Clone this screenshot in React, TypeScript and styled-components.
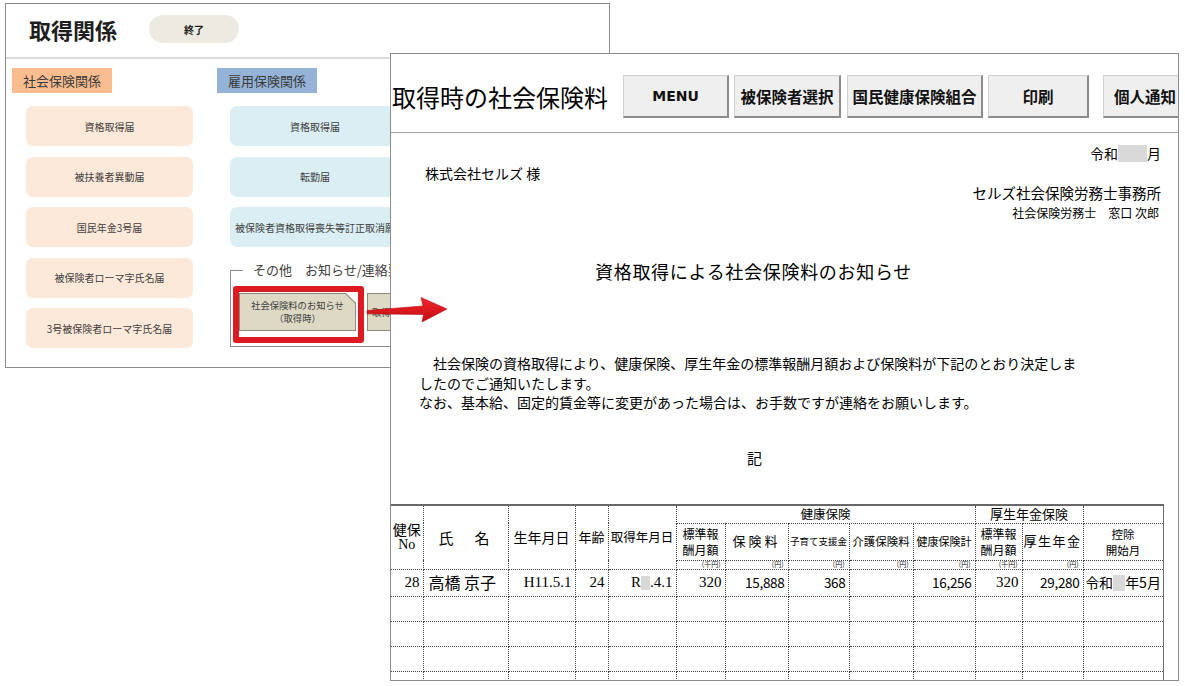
import React from "react"
import styled, {createGlobalStyle} from "styled-components"

const JP = `"Noto Sans CJK JP", "Noto Sans", sans-serif`
const SERIF = `"Liberation Serif", "Noto Sans CJK JP", serif`

const GlobalStyle = createGlobalStyle`
  html, body {
    margin: 0;
    padding: 0;
    background: #ffffff;
  }
  body {
    font-family: ${JP};
    color: #000;
  }
`

const Canvas = styled.div`
  position: relative;
  width: 1185px;
  height: 686px;
  overflow: hidden;
  background: #fff;
`

// ---------- back window : 取得関係 ----------

const MenuWindow = styled.div`
  position: absolute;
  left: 5px;
  top: 3px;
  width: 605px;
  height: 365px;
  box-sizing: border-box;
  border: 1px solid #8c8c8c;
  background: #fff;
  overflow: hidden;
  color: #404040;
  z-index: 1;
`

const MenuHeader = styled.div`
  height: 55px;
  box-sizing: border-box;
  display: flex;
  align-items: center;
  padding: 0 0 3px 23px;
  border-bottom: 2px solid #dadada;
`

const MenuTitle = styled.h1`
  margin: 0;
  font-size: 22px;
  font-weight: 700;
  line-height: 28px;
  color: #1e1e1e;
`

const PillButton = styled.div`
  margin-left: 32px;
  width: 90px;
  height: 28px;
  border-radius: 14px;
  background: #edebe1;
  display: flex;
  align-items: center;
  justify-content: center;
  font-size: 10px;
  font-weight: 700;
  color: #222;
`

const MenuBody = styled.div`
  display: grid;
  grid-template-columns: 205px 380px;
  padding: 9px 0 0 6px;
`

const Column = styled.div`
  display: flex;
  flex-direction: column;
  align-items: flex-start;
`

type Tone = "orange" | "blue"

const SectionLabel = styled.div<{$tone: Tone}>`
  width: 100px;
  height: 25px;
  box-sizing: border-box;
  padding-left: 11px;
  line-height: 25px;
  font-size: 13px;
  color: #3a3a3a;
  background: ${p => p.$tone === "orange" ? "#f9bd8f" : "#95b3d7"};
`

const ButtonStack = styled.div<{$indent: number}>`
  display: flex;
  flex-direction: column;
  gap: 10.5px;
  margin: 13px 0 0 ${p => p.$indent}px;
`

const FormButton = styled.div<{$tone: Tone, $w: number, $left?: boolean}>`
  width: ${p => p.$w}px;
  height: 40px;
  box-sizing: border-box;
  border-radius: 7px;
  background: ${p => p.$tone === "orange" ? "#fde9d9" : "#daeef3"};
  display: flex;
  align-items: center;
  justify-content: ${p => p.$left ? "flex-start" : "center"};
  padding-left: ${p => p.$left ? 5 : 0}px;
  font-size: 10px;
  color: #404040;
  white-space: nowrap;
`

const NoticeGroup = styled.fieldset`
  margin: 14px 0 0 13px;
  width: 360px;
  min-width: 0;
  box-sizing: border-box;
  border: 1px solid #8a8a8a;
  padding: 0 0 15px 8px;
`

const NoticeLegend = styled.legend`
  margin-left: 4px;
  padding: 0 10px;
  font-size: 13px;
  line-height: 18px;
  color: #404040;
  white-space: nowrap;
`

const NoticeRow = styled.div`
  display: flex;
  gap: 11px;
  margin-top: 14px;
`

const Highlight = styled.div`
  position: relative;
`

const HighlightFrame = styled.div`
  position: absolute;
  top: -7px;
  left: -6px;
  right: -8px;
  bottom: -12px;
  border: 6px solid #dc1c22;
  border-radius: 3px;
  pointer-events: none;
`

const NoteButton = styled.div`
  width: 117px;
  height: 38px;
  box-sizing: border-box;
  padding: 1px;
  background: #8f8a76;
  clip-path: polygon(0 0, calc(100% - 10px) 0, 100% 10px, 100% 100%, 0 100%);
`

const NoteFace = styled.div<{$left?: boolean}>`
  height: 100%;
  background: #ddd9c4;
  clip-path: polygon(0 0, calc(100% - 9.5px) 0, 100% 9.5px, 100% 100%, 0 100%);
  display: flex;
  flex-direction: column;
  align-items: ${p => p.$left ? "flex-start" : "center"};
  justify-content: center;
  padding-left: ${p => p.$left ? 4 : 0}px;
  font-size: 9.3px;
  line-height: 13px;
  color: #404040;
  white-space: nowrap;
`

// ---------- front window : 取得時の社会保険料 ----------

const ReportWindow = styled.div`
  position: absolute;
  left: 390px;
  top: 53px;
  width: 789px;
  height: 628px;
  box-sizing: border-box;
  border: 1px solid #8c8c8c;
  background: #fff;
  overflow: hidden;
  z-index: 2;
`

const ReportHeader = styled.div`
  height: 79px;
  box-sizing: border-box;
  display: flex;
  align-items: flex-end;
  padding: 0 0 14px 1px;
  border-bottom: 1px solid #a6a6a6;
`

const ReportTitle = styled.div`
  flex: none;
  font-size: 24px;
  line-height: 43px;
  margin-right: 15px;
  white-space: nowrap;
`

const ToolButton = styled.div<{$w: number, $after?: number, $latin?: boolean}>`
  flex: none;
  width: ${p => p.$w}px;
  height: 43px;
  box-sizing: border-box;
  margin-right: ${p => p.$after ?? 5}px;
  background: #efefef;
  border: 1px solid #cfcfcf;
  border-right: 2px solid #8c8c8c;
  border-bottom: 2px solid #8c8c8c;
  display: flex;
  align-items: center;
  justify-content: center;
  font-family: ${p => p.$latin ? `"DejaVu Sans", sans-serif` : JP};
  font-size: ${p => p.$latin ? 14 : 15.5}px;
  font-weight: 700;
  color: #111;
  white-space: nowrap;
`

const ReportBody = styled.div`
  padding-top: 10px;
  font-size: 14px;
  color: #000;
`

const RightLine = styled.div<{$size: number, $pr: number}>`
  text-align: right;
  line-height: 20px;
  font-size: ${p => p.$size}px;
  padding-right: ${p => p.$pr}px;
  white-space: nowrap;
`

const Addressee = styled.div`
  line-height: 20px;
  font-size: 14px;
  padding-left: 34px;
`

const Masked = styled.span<{$w: number, $h: number}>`
  display: inline-block;
  width: ${p => p.$w}px;
  height: ${p => p.$h}px;
  background: #d9d9d9;
  vertical-align: ${p => -Math.round(p.$h / 5)}px;
`

const NoticeTitle = styled.div`
  margin-top: 36px;
  padding-left: 204px;
  font-size: 18px;
  line-height: 24px;
  letter-spacing: 0.7px;
  white-space: nowrap;
`

const Paragraph = styled.div`
  margin-top: 71px;
  padding-left: 28px;
  font-size: 14px;
  line-height: 19.5px;
  white-space: nowrap;
`

const Indent = styled.span`
  display: inline-block;
  width: 14px;
`

const Ki = styled.div`
  margin-top: 35.5px;
  padding-left: 356px;
  font-size: 15px;
  line-height: 20px;
`

const Sheet = styled.table`
  margin-top: 36px;
  border-collapse: collapse;
  table-layout: fixed;
  width: 772px;
  border-top: 2px solid #686868;
  border-right: 1px solid #6e6e6e;
  color: #000;
`

const Row = styled.tr<{$h: number}>`
  height: ${p => p.$h}px;
`

const Cell = styled.td<{
    $align?: "left" | "right" | "center",
    $size?: number,
    $serif?: boolean,
    $edge?: boolean,
    $ls?: number,
}>`
  border: 1px dotted #444;
  ${p => p.$edge ? "border-left: none;" : ""}
  padding: 0 ${p => p.$align === "right" ? 3 : 0}px 0 ${p => p.$align === "left" ? 5 : 0}px;
  text-align: ${p => p.$align ?? "center"};
  font-family: ${p => p.$serif ? SERIF : JP};
  font-size: ${p => p.$size ?? 13}px;
  letter-spacing: ${p => p.$ls ?? 0}px;
  line-height: 1.15;
  white-space: nowrap;
  overflow: hidden;
  vertical-align: middle;
`

const Lines = styled.div`
  display: flex;
  flex-direction: column;
  align-items: center;
`

const Line = styled.span`
  display: block;
  line-height: 16px;
`

const Unit = styled(Cell)`
  font-size: 7px;
  line-height: 7px;
  padding-right: 4px;
  text-align: right;
  color: #222;
`

const Arrow = styled.svg`
  position: absolute;
  left: 360px;
  top: 290px;
  z-index: 3;
  overflow: visible;
`

const COLS = [32, 85, 67, 33, 68, 49, 63, 61, 64, 62, 47, 61, 80]

const App: React.FC = () => {
    return (
        <Canvas>
            <GlobalStyle/>

            <MenuWindow>
                <MenuHeader>
                    <MenuTitle>取得関係</MenuTitle>
                    <PillButton>終了</PillButton>
                </MenuHeader>
                <MenuBody>
                    <Column>
                        <SectionLabel $tone="orange">社会保険関係</SectionLabel>
                        <ButtonStack $indent={14}>
                            <FormButton $tone="orange" $w={167}>資格取得届</FormButton>
                            <FormButton $tone="orange" $w={167}>被扶養者異動届</FormButton>
                            <FormButton $tone="orange" $w={167}>国民年金3号届</FormButton>
                            <FormButton $tone="orange" $w={167}>被保険者ローマ字氏名届</FormButton>
                            <FormButton $tone="orange" $w={167}>3号被保険者ローマ字氏名届</FormButton>
                        </ButtonStack>
                    </Column>
                    <Column>
                        <SectionLabel $tone="blue">雇用保険関係</SectionLabel>
                        <ButtonStack $indent={13}>
                            <FormButton $tone="blue" $w={170}>資格取得届</FormButton>
                            <FormButton $tone="blue" $w={170}>転勤届</FormButton>
                            <FormButton $tone="blue" $w={180} $left>被保険者資格取得喪失等訂正取消願</FormButton>
                        </ButtonStack>
                        <NoticeGroup>
                            <NoticeLegend>その他　お知らせ/連絡票</NoticeLegend>
                            <NoticeRow>
                                <Highlight>
                                    <NoteButton>
                                        <NoteFace>
                                            <span>社会保険料のお知らせ</span>
                                            <span>（取得時）</span>
                                        </NoteFace>
                                    </NoteButton>
                                    <HighlightFrame/>
                                </Highlight>
                                <NoteButton>
                                    <NoteFace $left>取得時連絡票</NoteFace>
                                </NoteButton>
                            </NoticeRow>
                        </NoticeGroup>
                    </Column>
                </MenuBody>
            </MenuWindow>

            <ReportWindow>
                <ReportHeader>
                    <ReportTitle>取得時の社会保険料</ReportTitle>
                    <ToolButton $w={106} $latin>MENU</ToolButton>
                    <ToolButton $w={107} $after={6}>被保険者選択</ToolButton>
                    <ToolButton $w={136}>国民健康保険組合</ToolButton>
                    <ToolButton $w={101} $after={14}>印刷</ToolButton>
                    <ToolButton $w={85}>個人通知</ToolButton>
                </ReportHeader>
                <ReportBody>
                    <RightLine $size={14} $pr={17}>令和<Masked $w={29} $h={17}/>月</RightLine>
                    <Addressee>株式会社セルズ 様</Addressee>
                    <RightLine $size={14.5} $pr={17}>セルズ社会保険労務士事務所</RightLine>
                    <RightLine $size={12} $pr={19}>社会保険労務士{"　"}窓口 次郎</RightLine>
                    <NoticeTitle>資格取得による社会保険料のお知らせ</NoticeTitle>
                    <Paragraph>
                        <Indent/>社会保険の資格取得により、健康保険、厚生年金の標準報酬月額および保険料が下記のとおり決定しま<br/>
                        したのでご通知いたします。<br/>
                        なお、基本給、固定的賃金等に変更があった場合は、お手数ですが連絡をお願いします。
                    </Paragraph>
                    <Ki>記</Ki>
                    <Sheet>
                        <colgroup>
                            {COLS.map((w, i) => <col key={i} style={{width: w}}/>)}
                        </colgroup>
                        <tbody>
                        <Row $h={18}>
                            <Cell rowSpan={3} $edge $size={14}>
                                <Lines><Line>健保</Line><Line style={{fontFamily: SERIF}}>No</Line></Lines>
                            </Cell>
                            <Cell rowSpan={3} $size={15} $ls={3}>氏{"　"}名</Cell>
                            <Cell rowSpan={3} $size={14}>生年月日</Cell>
                            <Cell rowSpan={3} $size={13}>年齢</Cell>
                            <Cell rowSpan={3} $size={12.5}>取得年月日</Cell>
                            <Cell colSpan={5} $size={12.5}>健康保険</Cell>
                            <Cell colSpan={2} $size={13}>厚生年金保険</Cell>
                            <Cell/>
                        </Row>
                        <Row $h={37}>
                            <Cell $size={12}><Lines><Line>標準報</Line><Line>酬月額</Line></Lines></Cell>
                            <Cell $size={13} $ls={3}>保険料</Cell>
                            <Cell $size={9.5}>子育て支援金</Cell>
                            <Cell $size={11.5}>介護保険料</Cell>
                            <Cell $size={11}>健康保険計</Cell>
                            <Cell $size={12}><Lines><Line>標準報</Line><Line>酬月額</Line></Lines></Cell>
                            <Cell $size={13} $ls={1.5}>厚生年金</Cell>
                            <Cell $size={11.5}><Lines><Line>控除</Line><Line>開始月</Line></Lines></Cell>
                        </Row>
                        <Row $h={9}>
                            <Unit>(千円)</Unit>
                            <Unit>(円)</Unit>
                            <Unit>(円)</Unit>
                            <Unit>(円)</Unit>
                            <Unit>(円)</Unit>
                            <Unit>(千円)</Unit>
                            <Unit>(円)</Unit>
                            <Unit/>
                        </Row>
                        <Row $h={27}>
                            <Cell $edge $align="right" $serif $size={15}>28</Cell>
                            <Cell $align="left" $size={16}>高橋 京子</Cell>
                            <Cell $align="right" $serif $size={15}>H11.5.1</Cell>
                            <Cell $align="right" $serif $size={15}>24</Cell>
                            <Cell $align="right" $serif $size={15}>R<Masked $w={9} $h={14}/>.4.1</Cell>
                            <Cell $align="right" $serif $size={15}>320</Cell>
                            <Cell $align="right" $size={13.5} $ls={-0.3}>15,888</Cell>
                            <Cell $align="right" $size={13.5} $ls={-0.3}>368</Cell>
                            <Cell/>
                            <Cell $align="right" $size={13.5} $ls={-0.3}>16,256</Cell>
                            <Cell $align="right" $serif $size={15}>320</Cell>
                            <Cell $align="right" $size={13.5} $ls={-0.3}>29,280</Cell>
                            <Cell $size={14}>令和<Masked $w={12} $h={16}/>年5月</Cell>
                        </Row>
                        {[0, 1, 2, 3, 4].map(r => (
                            <Row key={r} $h={25}>
                                {COLS.map((_, c) => <Cell key={c} $edge={c === 0}/>)}
                            </Row>
                        ))}
                        </tbody>
                    </Sheet>
                </ReportBody>
            </ReportWindow>

            <Arrow width={90} height={40} viewBox="0 0 90 40">
                <defs>
                    <linearGradient id="arrowFill" x1="0" y1="0" x2="0" y2="1">
                        <stop offset="0" stopColor="#f3262b"/>
                        <stop offset="1" stopColor="#c10d12"/>
                    </linearGradient>
                </defs>
                <polygon
                    points="7,20.5 63,16 61,7.5 87,19 62,32 63.5,24.5 7,23.8"
                    fill="url(#arrowFill)"
                    stroke="#b40a10"
                    strokeWidth={0.6}
                    strokeLinejoin="round"
                />
            </Arrow>
        </Canvas>
    )
}

export default App
